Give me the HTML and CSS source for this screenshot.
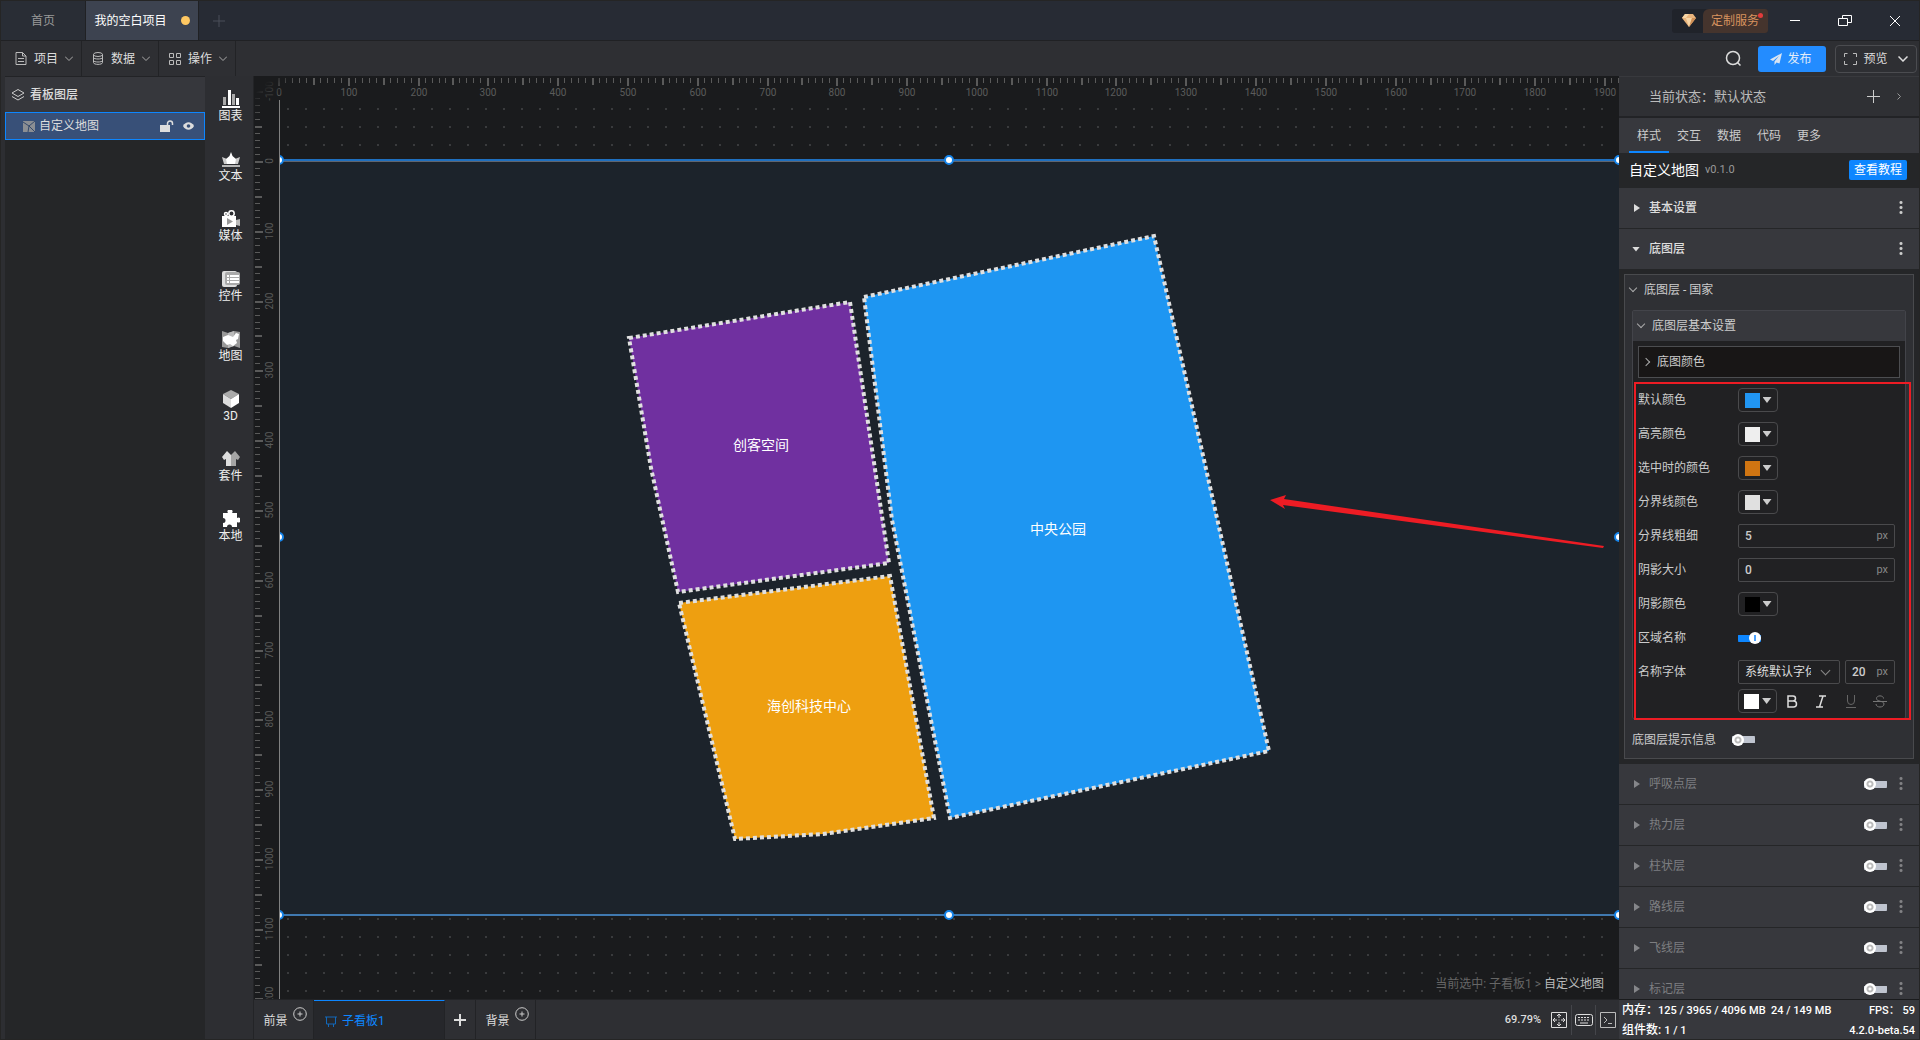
FILE: index.html
```
<!DOCTYPE html>
<html lang="zh-CN">
<head>
    <meta charset="UTF-8">
    <meta name="viewport" content="width=device-width, initial-scale=1.0">
    <title>我的空白项目</title>
    <link rel="stylesheet" href="styles.css">
</head>
<body>
    <header class="titlebar">
        <button class="tab">首页</button>
        <button class="tab active">我的空白项目<i class="dot"></i></button>
        <button class="tab-add" aria-label="新建">
            <svg width="12" height="12"><path d="M6 0v12M0 6h12" stroke="#4b4f58"/></svg>
        </button>
        <div class="window-tools">
            <button class="service">
                <span class="gem"><svg width="14" height="13" viewBox="0 0 14 13"><path d="M3 0h8l3 4-7 9-7-9z" fill="#e9b47c"/><path d="M3 0l4 0-3 4H0zM4 4h6l-3 9z" fill="#f8d6a6"/><path d="M10 4h4l-7 9z" fill="#cf8f56"/></svg></span>
                <span class="service-text">定制服务</span>
                <i class="badge"></i>
            </button>
            <button class="win" aria-label="最小化"><svg width="14" height="14"><path d="M2 6.500h10" stroke="#fff"/></svg></button>
            <button class="win" aria-label="还原"><svg width="14" height="14" fill="none" stroke="#fff"><path d="M.5 4.500h9v7h-9zM4.500 4.500v-3h9v7h-4"/></svg></button>
            <button class="win" aria-label="关闭"><svg width="14" height="14"><path d="M2 2l10 10M12 2L2 12" stroke="#fff"/></svg></button>
        </div>
    </header>

    <nav class="toolbar">
        <button class="menu">
            <svg width="12" height="13" fill="none" stroke="#bbb"><path d="M1 .5h6.500l3.500 3.500v8.500H1zM7.500.5V4H11M3 6.500h6M3 9.500h6"/></svg>
            项目
            <svg width="8" height="5" fill="none" stroke="#aaa"><path d="M0 .5l4 4 4-4"/></svg>
        </button>
        <button class="menu">
            <svg width="12" height="13" fill="none" stroke="#bbb"><ellipse cx="6" cy="2.500" rx="4.500" ry="2"/><path d="M1.500 2.500v8c0 2.500 9 2.500 9 0v-8M1.500 5.500c0 2 9 2 9 0M1.500 8.500c0 2 9 2 9 0"/></svg>
            数据
            <svg width="8" height="5" fill="none" stroke="#aaa"><path d="M0 .5l4 4 4-4"/></svg>
        </button>
        <button class="menu">
            <svg width="12" height="13" fill="none" stroke="#bbb"><path d="M.5 1.500h4v4h-4zM7.500 1.500h4v4h-4zM.5 8.500h4v4h-4zM7.500 8.500h4v4h-4z"/></svg>
            操作
            <svg width="8" height="5" fill="none" stroke="#aaa"><path d="M0 .5l4 4 4-4"/></svg>
        </button>
        <div class="toolbar-right">
            <button class="icon-btn search" aria-label="搜索"><svg width="17" height="17" fill="none" stroke="#ddd" stroke-width="1.500"><circle cx="8" cy="8" r="6.500"/><path d="M12.500 12.500l3 3"/></svg></button>
            <button class="publish"><svg width="12" height="12"><path d="M12 0L0 6.500l3 1.500 6-5-4.500 5.500V12l2-2.500 3 1z" fill="#d8e4f2"/></svg>发布</button>
            <button class="preview">
                <svg width="13" height="12" fill="none" stroke="#bbb"><path d="M.5 4V.5h3M9 .5h3.500V4M12.500 8v3.500H9M3.500 11.500h-3V8"/></svg>
                预览
                <svg width="10" height="6" fill="none" stroke="#ddd" stroke-width="1.500"><path d="M.5.5L5 5 9.500.5"/></svg>
            </button>
        </div>
    </nav>

    <main class="workspace">
        <aside class="layers">
            <div class="layers-title">
                <svg width="14" height="12" fill="none" stroke="#ccc"><path d="M7 .5L13 4 7 7.500 1 4zM1 7.500L7 11l6-3.500"/></svg>
                看板图层
            </div>
            <button class="layer">
                <svg width="12" height="11" viewBox="0 0 12 11"><path d="M0 0h12v11H0z" fill="#8b8e93"/><path d="M0 1l6 4 6-5M5 11l1-6 6 6" stroke="#34496b" fill="none"/></svg>
                <span>自定义地图</span>
                <svg width="14" height="12"><path d="M0 5h10v7H0z" fill="#ddd"/><path d="M7.500 6V3.500a2.500 2.500 0 0 1 5 0V5" stroke="#ddd" stroke-width="1.500" fill="none"/></svg>
                <svg width="11" height="8"><path d="M0 4c2.500-5 8.500-5 11 0-2.500 5-8.500 5-11 0z" fill="#ddd"/><circle cx="5.500" cy="4" r="1.800" fill="#385078"/></svg>
            </button>
        </aside>

        <nav class="parts">
            <button class="part"><svg width="18" height="18"><path d="M0 16h18v2H0zM14 8h3v7h-3z" fill="#fff"/><path d="M1 7h3v8H1zM10 4h3v11h-3z" fill="#aaa"/><path d="M6 0h3v15H6z" fill="#fff"/></svg>图表</button>
            <button class="part"><svg width="18" height="18"><path d="M0 7l5 2 8 0 5-2-2 7H2z" fill="#ccc"/><path d="M9 2l1.500 4L14 9l-1 5H5L4 9l3.500-3z" fill="#fff"/><path d="M0 15h18v2H0z" fill="#b5b5b5"/></svg>文本</button>
            <button class="part"><svg width="18" height="18"><path d="M14 10l4-1v7l-4-1z" fill="#bbb"/><g fill="none" stroke="#fff" stroke-width="1.500"><circle cx="4" cy="4" r="1.500"/><circle cx="9.500" cy="3.500" r="2.700"/></g><path d="M0 6h14v11H0z" fill="#fff"/><path d="M5 8l6 3.500L5 15z" fill="#999"/></svg>媒体</button>
            <button class="part"><svg width="18" height="18"><rect y="1" width="15" height="16" rx="2" fill="#ddd"/><rect x="3" y="2" width="15" height="13" rx="2" fill="#aaa"/><path d="M5 5h2v2H5zM8 5h9v2H8zM5 8h2v2H5zM8 8h9v2H8zM5 11h2v2H5zM8 11h9v2H8z" fill="#fff"/></svg>控件</button>
            <button class="part"><svg width="18" height="18"><path d="M0 1l6 2 6-2 6 1v16l-6-2-6 2-6-1z" fill="#999"/><path d="M6 3l6-2v15l-6 2z" fill="#bbb"/><path d="M1 7l5-2 5 2 3-4 3 1-1 5-2 1 1 3-4 3-3-2-3 1-4-4z" fill="#fff"/></svg>地图</button>
            <button class="part"><svg width="18" height="18"><path d="M9 0l8 4-8 5-8-5z" fill="#aaa"/><path d="M1 4l8 5v9l-8-5z" fill="#ddd"/><path d="M17 4L9 9v9l8-5z" fill="#fff"/></svg>3D</button>
            <button class="part"><svg width="18" height="18"><path d="M5 1L0 7l2 3 2-1v7h5V5z" fill="#ddd"/><path d="M13 1l5 6-2 3-2-1v7H9V5z" fill="#a5a5a5"/></svg>套件</button>
            <button class="part"><svg width="18" height="18"><path d="M1 3h5a2.500 2.500 0 1 1 4 0h5v5a2.500 2.500 0 1 1 0 4v5h-5a2.500 2.500 0 0 0-5 0H1v-4a2.500 2.500 0 0 0 0-5z" fill="#fff"/></svg>本地</button>
        </nav>

        <section class="center">
            <div class="stage">
                <svg class="canvas" width="100%" height="100%">
                    <defs>
                        <pattern id="grid" width="18" height="18" patternUnits="userSpaceOnUse" x="7" y="7">
                            <path d="M1 1h2v2H1z" fill="#3a3b3d"/>
                        </pattern>
                        <linearGradient id="corner" x1="0" y1="0" x2="1" y2="1">
                            <stop offset="0.150" stop-color="#1a1b1d"/>
                            <stop offset="0.400" stop-color="#1a1b1d" stop-opacity="0"/>
                        </linearGradient>
                    </defs>
                    <svg class="viewport" x="25" y="24" width="100%" height="100%">
                        <rect width="100%" height="100%" fill="url(#grid)"/>
                        <g transform="translate(0 61)">
                            <rect width="1340" height="754" fill="#1c232b"/>
                            <path d="M0-1h1340" stroke="#1f6fbe" stroke-width="2"/>
                            <path d="M0 .5h1340" stroke="#5f6570"/>
                            <path d="M0 754h1340" stroke="#4079b0" stroke-width="2"/>
                            <g class="regions">
                                <path d="M350 177L571 141 610 402 399 431 372 307z" fill="#7030a0"/>
                                <path d="M400 442L611 415 655 657 544 673 456 678z" fill="#ee9f10"/>
                                <path d="M585 136L875 75 990 590 671 657 613 359z" fill="#1e96f2"/>
                            </g>
                            <g class="region-names">
                                <text x="482" y="289">创客空间</text>
                                <text x="779" y="373">中央公园</text>
                                <text x="530" y="550">海创科技中心</text>
                            </g>
                            <g class="handles">
                                <circle cx="0" cy="-1" r="4"/><circle cx="670" cy="-1" r="4"/><circle cx="1340" cy="-1" r="4"/>
                                <circle cx="0" cy="376" r="4"/><circle cx="1340" cy="376" r="4"/>
                                <circle cx="0" cy="754" r="4"/><circle cx="670" cy="754" r="4"/><circle cx="1340" cy="754" r="4"/>
                            </g>
                            <path d="M991 339L1007 334 1005 338 1325 385 1324 387 1004 344 1006 348z" fill="#ed1c24"/>
                        </g>
                    </svg>
                    <g id="rulerX"></g>
                    <g id="rulerY"></g>
                    <rect width="60" height="60" fill="url(#corner)"/>
                    <path d="M25.500 24v900" stroke="#808080"/>
                </svg>
                <div class="crumb">当前选中: 子看板1 &gt; <b>自定义地图</b></div>
            </div>
            <footer class="boards">
                <button class="board-tab">前景<svg class="plus" width="14" height="14" fill="none" stroke="#ccc"><circle cx="7" cy="7" r="6.300"/><path d="M7 4.500v5M4.500 7h5"/></svg></button>
                <button class="board-tab current"><svg width="12" height="11" fill="none" stroke="#1269bb"><path d="M0 1h12M1.500 1v7h9V1M3.500 8v3M8.500 8v3"/></svg>子看板1</button>
                <button class="board-add" aria-label="添加"><svg width="12" height="12"><path d="M6 0v12M0 6h12" stroke="#ddd" stroke-width="2"/></svg></button>
                <button class="board-tab">背景<svg class="plus" width="14" height="14" fill="none" stroke="#ccc"><circle cx="7" cy="7" r="6.300"/><path d="M7 4.500v5M4.500 7h5"/></svg></button>
                <div class="board-tools">
                    <span class="zoom">69.79%</span>
                    <button class="tool" aria-label="适应"><svg width="16" height="16" fill="none" stroke="#ddd"><path d="M.5.5h15v15H.5z"/><path d="M8 2v4M8 10v4M2 8h4M10 8h4M6 4l2-2 2 2M6 12l2 2 2-2M4 6L2 8l2 2M12 6l2 2-2 2M7.500 8h1"/></svg></button>
                    <button class="tool" aria-label="快捷键"><svg width="18" height="12" fill="none" stroke="#ddd"><rect x=".5" y=".5" width="17" height="11" rx="2"/><path d="M3 3.500h12M3 6h12" stroke-dasharray="2 1"/><path d="M5 9h8"/></svg></button>
                    <button class="tool" aria-label="控制台"><svg width="16" height="16" fill="none" stroke="#bbb"><path d="M.5.500h15v15H.5zM4 5l3 3-3 3M8 11.500h4"/></svg></button>
                </div>
            </footer>
        </section>

        <aside class="inspector">
            <div class="inspector-body">
                <div class="state">
                    <span>当前状态：默认状态</span>
                    <button class="icon-btn" aria-label="添加状态"><svg width="13" height="13"><path d="M6.500 0v13M0 6.500h13" stroke="#ccc"/></svg></button>
                    <button class="icon-btn" aria-label="展开"><svg width="4" height="7" fill="none" stroke="#999"><path d="M.5.5l3 3-3 3"/></svg></button>
                </div>
                <nav class="tabs">
                    <button class="on">样式</button><button>交互</button><button>数据</button><button>代码</button><button>更多</button>
                </nav>
                <div class="component">
                    <h1>自定义地图</h1><span class="version">v0.1.0</span>
                    <a class="guide" href="#">查看教程</a>
                </div>
                <div class="section"><i class="caret"></i><span>基本设置</span><button class="more" aria-label="更多"></button></div>
                <div class="section"><i class="caret open"></i><span>底图层</span><button class="more" aria-label="更多"></button></div>
                <div class="section-body">
                    <div class="group">
                        <div class="group-title"><i class="chev"></i>底图层 - 国家</div>
                        <div class="subgroup">
                            <div class="subgroup-title"><i class="chev"></i>底图层基本设置</div>
                            <button class="fold"><i class="chev right"></i>底图颜色</button>
                            <div class="fields">
                                <div class="field"><label for="c1">默认颜色</label><button id="c1" class="color"><i class="sw blue"></i></button></div>
                                <div class="field"><label for="c2">高亮颜色</label><button id="c2" class="color"><i class="sw light"></i></button></div>
                                <div class="field"><label for="c3">选中时的颜色</label><button id="c3" class="color"><i class="sw orange"></i></button></div>
                                <div class="field"><label for="c4">分界线颜色</label><button id="c4" class="color"><i class="sw gray"></i></button></div>
                                <div class="field"><label for="w">分界线粗细</label><div class="num"><input id="w" type="text" value="5"><span>px</span></div></div>
                                <div class="field"><label for="s">阴影大小</label><div class="num"><input id="s" type="text" value="0"><span>px</span></div></div>
                                <div class="field"><label for="c5">阴影颜色</label><button id="c5" class="color"><i class="sw black"></i></button></div>
                                <div class="field"><label for="n">区域名称</label><input id="n" class="switch" type="checkbox" checked></div>
                                <div class="field">
                                    <label for="f">名称字体</label>
                                    <div class="font"><select id="f"><option>系统默认字体</option></select><i class="chev"></i></div>
                                    <div class="num small"><input type="text" value="20" aria-label="字号"><span>px</span></div>
                                </div>
                                <div class="font-style">
                                    <button class="color" aria-label="字体颜色"><i class="sw white"></i></button>
                                    <button class="fmt" aria-label="粗体"><svg width="12" height="13" fill="none" stroke="#ddd" stroke-width="1.500"><path d="M2 1h5a2.500 2.500 0 0 1 0 5H2zM2 6h5.500a3 3 0 0 1 0 6H2z"/></svg></button>
                                    <button class="fmt" aria-label="斜体"><svg width="12" height="13" fill="none" stroke="#ddd" stroke-width="1.500"><path d="M4 1h7M1 12h7M8 1L4.500 12"/></svg></button>
                                    <button class="fmt" aria-label="下划线"><svg width="12" height="13" fill="none" stroke="#666"><path d="M2.500 0v6a3.500 3.500 0 0 0 7 0V0M1 12.500h10"/></svg></button>
                                    <button class="fmt" aria-label="删除线"><svg width="14" height="13" fill="none" stroke="#777"><path d="M10.500 3.500C10.500 0 3.500 0 3.500 3.500c0 3.500 7.500 2 7.500 5.500 0 4-8 4-8 0M0 6.500h14"/></svg></button>
                                </div>
                            </div>
                        </div>
                        <div class="tip"><label for="t">底图层提示信息</label><input id="t" class="switch" type="checkbox"></div>
                    </div>
                    <div class="mark"></div>
                </div>
                <div class="section off"><i class="caret"></i><label for="l1">呼吸点层</label><input id="l1" class="switch" type="checkbox"><button class="more" aria-label="更多"></button></div>
                <div class="section off"><i class="caret"></i><label for="l2">热力层</label><input id="l2" class="switch" type="checkbox"><button class="more" aria-label="更多"></button></div>
                <div class="section off"><i class="caret"></i><label for="l3">柱状层</label><input id="l3" class="switch" type="checkbox"><button class="more" aria-label="更多"></button></div>
                <div class="section off"><i class="caret"></i><label for="l4">路线层</label><input id="l4" class="switch" type="checkbox"><button class="more" aria-label="更多"></button></div>
                <div class="section off"><i class="caret"></i><label for="l5">飞线层</label><input id="l5" class="switch" type="checkbox"><button class="more" aria-label="更多"></button></div>
                <div class="section off"><i class="caret"></i><label for="l6">标记层</label><input id="l6" class="switch" type="checkbox"><button class="more" aria-label="更多"></button></div>
            </div>
            <footer class="status">
                <div><span>内存：<b>125 / 3965 / 4096 MB&nbsp; 24 / 149 MB</b></span><span><b>FPS：&nbsp;59</b></span></div>
                <div><span>组件数: <b>1 / 1</b></span><span><b>4.2.0-beta.54</b></span></div>
            </footer>
        </aside>
    </main>
    <script src="script.js"></script>
</body>
</html>
```
FILE: styles.css
```
* {
    box-sizing: border-box;
}
body {
    margin: 0;
    height: 100vh;
    display: flex;
    flex-direction: column;
    overflow: hidden;
    border: 1px solid #252525;
    background-color: #2d2e32;
    color: #ccc;
    font-family: Roboto, "Noto Sans CJK SC", sans-serif;
    font-size: 12px;
    line-height: 16px;
}
button, input, select {
    font: inherit;
    color: inherit;
    background: none;
    border: none;
    padding: 0;
    margin: 0;
    outline: none;
}
button {
    display: flex;
    align-items: center;
    justify-content: center;
    cursor: pointer;
}
svg {
    flex: none;
}

/* title bar */
.titlebar {
    display: flex;
    height: 40px;
    flex: none;
    background-color: #272b34;
    border-bottom: 1px solid #202124;
}
.tab {
    width: 85px;
    background-color: #292d35;
    border-right: 1px solid #202124;
    color: #999;
}
.tab.active {
    width: 113px;
    background-color: #3d4350;
    color: #fff;
    gap: 14px;
}
.dot {
    width: 9px;
    height: 9px;
    border-radius: 50%;
    background-color: #ffc862;
}
.tab-add {
    width: 40px;
}
.window-tools {
    margin-left: auto;
    display: flex;
    align-items: center;
    padding-right: 17px;
}
.service {
    position: relative;
    width: 96px;
    height: 24px;
    margin-right: 20px;
    border-radius: 3px;
    overflow: hidden;
    background-color: #20232a;
}
.gem {
    flex: 1;
    display: flex;
    justify-content: center;
    padding-left: 3px;
}
.service-text {
    width: 65px;
    padding: 4px 0 4px 8px;
    text-align: left;
    border-radius: 6px 0 0 0;
    background-color: #45342d;
    color: #d8935f;
}
.badge {
    position: absolute;
    top: 4px;
    right: 5px;
    width: 5px;
    height: 5px;
    border-radius: 50%;
    background-color: #e23b3b;
}
.win {
    width: 14px;
    margin-right: 36px;
}
.win:last-child {
    margin-right: 0;
}

/* toolbar */
.toolbar {
    display: flex;
    height: 35px;
    flex: none;
    padding-left: 4px;
    background-color: #2e2f33;
}
.menu {
    gap: 7px;
    padding: 0 8px 0 10px;
    border-right: 1px solid #222326;
    color: #ddd;
}
.toolbar-right {
    margin-left: auto;
    display: flex;
    align-items: center;
    padding-right: 2px;
}
.search {
    margin-right: 16px;
}
.publish {
    width: 68px;
    height: 26px;
    gap: 5px;
    margin-right: 9px;
    padding-right: 2px;
    border-radius: 3px;
    background-color: #238cff;
    color: #e2ecf8;
}
.preview {
    width: 82px;
    height: 28px;
    gap: 6px;
    border: 1px solid #4b4c50;
    border-radius: 4px;
    color: #ddd;
}
.preview svg:last-child {
    margin-left: 4px;
}

/* workspace */
.workspace {
    flex: 1;
    display: flex;
    min-height: 0;
}
.layers {
    width: 200px;
    margin-left: 4px;
    flex: none;
    background-color: #252628;
    border-top: 1px solid #222326;
}
.layers-title {
    display: flex;
    align-items: center;
    gap: 5px;
    height: 35px;
    padding-left: 6px;
    background-color: #36373c;
    font-weight: 500;
    color: #ddd;
}
.layer {
    width: 100%;
    height: 28px;
    padding: 0 10px 0 17px;
    gap: 4px;
    justify-content: flex-start;
    border: 1px solid #0d86ff;
    background-color: #385078;
    color: #ddd;
}
.layer span {
    flex: 1;
    text-align: left;
}
.layer svg:last-child {
    margin-left: 5px;
}
.parts {
    width: 49px;
    flex: none;
    padding-top: 14px;
    border-right: 1px solid #232427;
}
.part {
    flex-direction: column;
    width: 48px;
    margin-bottom: 26px;
    padding-left: 3px;
    color: #eee;
}
.center {
    flex: 1;
    min-width: 0;
    display: flex;
    flex-direction: column;
}
.stage {
    position: relative;
    flex: 1;
    min-height: 0;
    overflow: hidden;
    background-color: #1a1b1d;
}
.canvas {
    position: absolute;
    inset: 0;
}
.viewport {
    overflow: hidden;
}
.regions path {
    stroke: #e0e0e0;
    stroke-width: 4px;
    stroke-dasharray: 4 3;
}
.region-names {
    fill: #fff;
    font-size: 14px;
    text-anchor: middle;
}
.handles circle {
    fill: #fff;
    stroke: #1584ea;
    stroke-width: 2px;
}
.ruler-text {
    fill: #5b5b5b;
    font-size: 10px;
    text-anchor: middle;
}
.crumb {
    position: absolute;
    right: 15px;
    bottom: 7px;
    color: #666;
}
.crumb b {
    font-weight: 400;
    color: #bbb;
}
.boards {
    display: flex;
    flex: none;
    height: 40px;
    border-top: 1px solid #222326;
    background-color: #2e2f33;
}
.board-tab {
    width: 60px;
    padding-top: 2px;
    padding-left: 3px;
    gap: 5px;
    border-right: 1px solid #222326;
    color: #ddd;
}
.board-tab.current {
    width: 131px;
    gap: 5px;
    padding-left: 11px;
    justify-content: flex-start;
    border-top: 1px solid #0d86ff;
    background-color: #26272b;
    color: #0d86ff;
}
.plus {
    margin-bottom: 14px;
}
.board-add {
    width: 31px;
    border-right: 1px solid #222326;
}
.board-tools {
    margin-left: auto;
    display: flex;
    align-items: center;
}
.zoom {
    margin-right: 6px;
    font-size: 11px;
    font-weight: 500;
    color: #ddd;
}
.tool {
    width: 24px;
    height: 30px;
    border-left: 1px solid #44454a;
}
.zoom + .tool {
    border-left: none;
}

/* inspector */
.inspector {
    width: 300px;
    flex: none;
    display: flex;
    flex-direction: column;
    background-color: #252628;
}
.inspector-body {
    flex: 1;
    min-height: 0;
    overflow: hidden;
}
.icon-btn {
    height: 20px;
}
.state {
    display: flex;
    align-items: center;
    height: 42px;
    padding: 0 18px 0 30px;
    gap: 17px;
    border-top: 1px solid #38393d;
    border-bottom: 2px solid #222326;
    background-color: #2f3034;
    font-size: 13px;
    color: #bbb;
}
.state span {
    flex: 1;
}
.tabs {
    display: flex;
    height: 35px;
    padding-left: 10px;
    background-color: #37383d;
}
.tabs button {
    width: 40px;
    padding-top: 2px;
    color: #ccc;
    border-bottom: 2px solid transparent;
}
.tabs .on {
    border-bottom-color: #0d86ff;
}
.component {
    display: flex;
    align-items: center;
    height: 35px;
    padding: 0 12px 2px 10px;
    gap: 6px;
}
.component h1 {
    margin: 0;
    font-size: 14px;
    font-weight: 400;
    color: #fff;
}
.version {
    font-size: 11px;
    color: #999;
}
.guide {
    margin-left: auto;
    padding: 2px 5px;
    border-radius: 2px;
    background-color: #0d86ff;
    color: #fff;
    text-decoration: none;
}
.section {
    display: flex;
    align-items: center;
    height: 41px;
    padding: 0 16px 0 15px;
    border-bottom: 1px solid #252628;
    background-color: #37383d;
    font-weight: 500;
    color: #ddd;
}
.section span, .section label {
    flex: 1;
}
.caret {
    width: 6px;
    height: 8px;
    margin-right: 9px;
    background-color: #ddd;
    clip-path: polygon(0 0, 100% 50%, 0 100%);
}
.caret.open {
    width: 8px;
    height: 5px;
    margin-left: -2px;
    clip-path: polygon(0 0, 100% 0, 50% 100%);
}
.more {
    width: 4px;
    height: 15px;
    margin-bottom: 2px;
    background: radial-gradient(circle, #ccc 1px, transparent 2px) 0 0 / 4px 5px;
}
.section.off {
    font-weight: 400;
    color: #7d7e81;
}
.off .caret {
    background-color: #85868a;
}
.off .switch {
    margin-right: 12px;
}
.off .more {
    opacity: 0.5;
}
.section-body {
    position: relative;
    padding: 4px 5px 5px;
}
.group {
    border: 1px solid #494a4d;
    background-color: #2f3034;
}
.group-title {
    display: flex;
    align-items: center;
    height: 30px;
    padding-left: 4px;
    margin-bottom: 5px;
}
.chev {
    width: 6px;
    height: 6px;
    margin: -4px 8px 0 1px;
    border: solid #aaa;
    border-width: 0 1px 1px 0;
    transform: rotate(45deg);
}
.chev.right {
    margin-top: 0;
    margin-left: -2px;
    transform: rotate(-45deg);
}
.subgroup {
    margin: 0 7px;
    border: 1px solid #43444a;
    border-radius: 2px;
    background-color: #212123;
}
.subgroup-title {
    display: flex;
    align-items: center;
    height: 30px;
    margin-bottom: 5px;
    padding-left: 4px;
    background-color: #37383d;
}
.fold {
    width: calc(100% - 10px);
    height: 32px;
    margin: 0 5px 5px;
    padding-left: 6px;
    justify-content: flex-start;
    border: 1px solid #4c4d50;
    background-color: #181616;
}
.fields {
    padding: 0 10px 5px 5px;
}
.field {
    display: flex;
    align-items: center;
    height: 34px;
}
.field label {
    width: 100px;
    flex: none;
}
.color {
    width: 40px;
    height: 24px;
    gap: 3px;
    border: 1px solid #4a4a4c;
    border-radius: 4px;
}
.color::after {
    content: "";
    width: 9px;
    height: 6px;
    background-color: #ccc;
    clip-path: polygon(0 0, 100% 0, 50% 100%);
}
.sw {
    width: 15px;
    height: 15px;
}
.blue {
    background-color: #2196f3;
}
.light {
    background-color: #eee;
}
.orange {
    background-color: #d07512;
}
.gray {
    background-color: #e0e0e0;
}
.black {
    background-color: #000;
}
.white {
    background-color: #fff;
}
.num {
    display: flex;
    align-items: center;
    flex: 1;
    height: 24px;
    padding: 0 6px;
    border: 1px solid #4a4a4c;
    border-radius: 2px;
}
.num input {
    flex: 1;
    width: 0;
    font-weight: 500;
}
.num span {
    font-size: 11px;
    color: #888;
}
.num.small {
    flex: none;
    width: 50px;
    margin-left: 5px;
}
.switch {
    appearance: none;
    position: relative;
    width: 23px;
    height: 12px;
    background: linear-gradient(#bfc4cf, #bfc4cf) center / 23px 7px no-repeat;
    border-radius: 4px;
}
.switch::before {
    content: "";
    position: absolute;
    left: 0;
    top: 0;
    width: 12px;
    height: 12px;
    border-radius: 50%;
    background: radial-gradient(circle, #fff 1px, #bbb 2px, #bbb 3px, #fff 4px);
}
.switch:checked {
    background-image: linear-gradient(#0d86ff, #0d86ff);
}
.switch:checked::before {
    left: 11px;
    background: linear-gradient(#4da3ff, #4da3ff) center / 2px 6px no-repeat #fff;
}
.font {
    display: flex;
    align-items: center;
    width: 102px;
    height: 24px;
    border: 1px solid #4a4a4c;
    border-radius: 2px;
}
.font select {
    appearance: none;
    flex: 1;
    width: 0;
    padding-left: 6px;
    color: #ddd;
}
.font .chev {
    width: 7px;
    height: 7px;
    margin: -4px 10px 0 11px;
    border-color: #888;
}
.font-style {
    display: flex;
    align-items: center;
    height: 24px;
    padding-left: 100px;
}
.fmt {
    width: 30px;
    height: 24px;
}
.tip {
    display: flex;
    align-items: center;
    height: 39px;
    gap: 16px;
    padding: 2px 0 0 7px;
}
.mark {
    position: absolute;
    top: 112px;
    right: 8px;
    bottom: 44px;
    left: 15px;
    border: 2px solid #ed1c24;
    pointer-events: none;
}
.status {
    flex: none;
    height: 40px;
    padding: 0 4px 0 3px;
    border-top: 1px solid #1a1b1d;
    background-color: #37383d;
    color: #fff;
    font-weight: 500;
}
.status div {
    display: flex;
    justify-content: space-between;
    height: 20px;
    line-height: 20px;
}
.status b {
    font-size: 11px;
    font-weight: 500;
}
```
FILE: script.js
```
const SCALE = 0.6979;
const ORIGIN_X = 25;
const ORIGIN_Y = 85;
const NS = 'http://www.w3.org/2000/svg';

function add(parent, name, attrs, text) {
    const el = document.createElementNS(NS, name);
    for (const key in attrs) el.setAttribute(key, attrs[key]);
    if (text !== undefined) el.textContent = text;
    parent.appendChild(el);
}

function tickSize(v) {
    if (v % 100 === 0) return 9;
    return v % 50 === 0 ? 7 : 5;
}

function drawRulers() {
    const rulerX = document.getElementById('rulerX');
    const rulerY = document.getElementById('rulerY');

    for (let v = 0; v <= 1950; v += 10) {
        const x = Math.round(ORIGIN_X + v * SCALE);
        const size = tickSize(v);
        add(rulerX, 'rect', { x: x - 1, y: 2, width: size > 5 ? 2 : 1, height: Math.min(size, 8), fill: '#5a5a5a' });
        if (v % 100 === 0) {
            add(rulerX, 'text', { x, y: 20, class: 'ruler-text' }, v);
        }
    }

    for (let v = -100; v <= 1200; v += 10) {
        const y = Math.round(ORIGIN_Y + v * SCALE);
        const size = tickSize(v);
        add(rulerY, 'rect', { x: 1, y, width: size > 7 ? 8 : size, height: size > 5 ? 2 : 1, fill: '#5a5a5a' });
        if (v % 100 === 0) {
            add(rulerY, 'text', { transform: `translate(19 ${y}) rotate(-90)`, class: 'ruler-text' }, v);
        }
    }
}

drawRulers();
```
